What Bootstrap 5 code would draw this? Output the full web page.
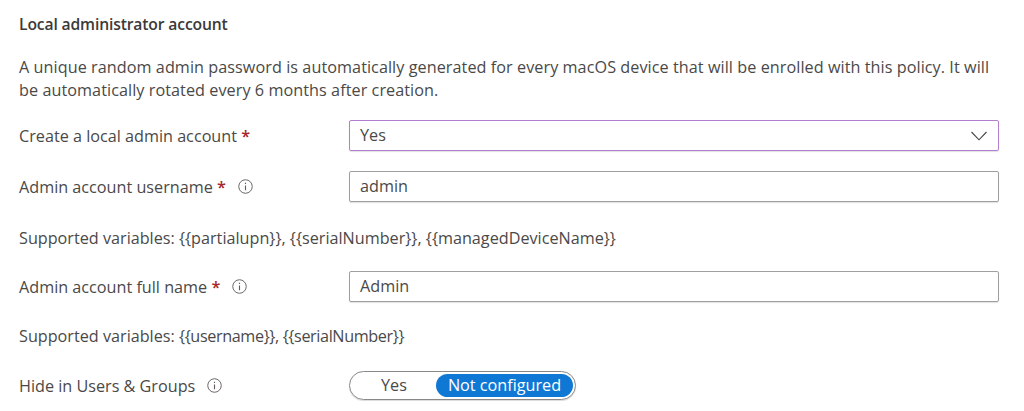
<!DOCTYPE html>
<html lang="en">
<head>
    <meta charset="UTF-8">
    <title>Local administrator account</title>
    <link rel="stylesheet" href="https://cdn.jsdelivr.net/npm/bootstrap@5.3.0/dist/css/bootstrap.min.css">
    <style>
        body {
            font-family: "Open Sans", "Noto Sans", sans-serif;
            font-size: 16.2px;
            color: #4a4948;
            background: #fff;
            overflow: hidden;
        }
        .page-wrap { padding: 13px 25px 0 19px; }
        .section-title { font-size: 15.7px; font-weight: 600; letter-spacing: -.15px; line-height: 22px; margin: 0 0 21px; color: #3b3a39; }
        .intro-text { line-height: 23px; margin: 0 0 18px; letter-spacing: .06px; }
        .form-line { height: 31px; }
        .line-label { width: 330px; flex: none; line-height: 22px; }
        .req-star { color: #a4262c; font-weight: 600; }
        .info-icon { width: 15px; height: 15px; margin-left: 12px; color: #605e5c; }
        .text-box {
            flex: 1;
            height: 31px;
            border: 1px solid #a19f9d;
            border-radius: 2px;
            padding: 0 10px;
            line-height: 29px;
            box-shadow: 0 1px 1px rgba(0,0,0,.12);
        }
        .text-box.is-open { border-color: #b27fd0; }
        .chevron-icon { width: 16px; height: 10px; color: #444; margin-right: 1px; }
        .hint-line { line-height: 22px; }
        .hint-tight { margin-top: 23px; }
        .var-list { letter-spacing: -.38px; }
        .gap-a { margin-top: 20px; }
        .gap-b { margin-top: 25px; }
        .gap-c { margin-top: 22px; }
        .gap-d { margin-top: 23px; }
        .pill-switch {
            width: 227px;
            height: 29px;
            border: 1px solid #8a8886;
            border-radius: 15px;
            padding: 2px;
            box-shadow: 0 1px 1px rgba(0,0,0,.15);
        }
        .pill-opt { flex: 1; text-align: center; line-height: 23px; border-radius: 12px; }
        .pill-on { flex: none; width: 137px; background: #0f78d4; color: #fff; }
    </style>
</head>
<body>
    <div class="page-wrap">
        <h2 class="section-title">Local administrator account</h2>
        <p class="intro-text">A unique random admin password is automatically generated for every macOS device that will be enrolled with this policy. It will be automatically rotated every 6 months after creation.</p>

        <div class="d-flex align-items-center form-line">
            <div class="line-label">Create a local admin account <span class="req-star">*</span></div>
            <div class="text-box is-open d-flex align-items-center justify-content-between">
                <span>Yes</span>
                <svg class="chevron-icon" viewBox="0 0 16 10" fill="none" stroke="currentColor" stroke-width="1.1"><path d="M.5 1 8 8.8 15.5 1"/></svg>
            </div>
        </div>

        <div class="d-flex align-items-center form-line gap-a">
            <div class="line-label d-flex align-items-center">
                <span>Admin account username <span class="req-star">*</span></span>
                <svg class="info-icon" viewBox="0 0 16 16" fill="none" stroke="currentColor"><circle cx="8" cy="8" r="7.2" stroke-width="1"/><path d="M8 7v5M8 4v1.3" stroke-width="1.2"/></svg>
            </div>
            <div class="text-box">admin</div>
        </div>
        <div class="hint-line gap-b">Supported variables: {{partialupn}}, {{serialNumber}}, {{managedDeviceName}}</div>

        <div class="d-flex align-items-center form-line gap-c">
            <div class="line-label d-flex align-items-center">
                <span>Admin account full name <span class="req-star">*</span></span>
                <svg class="info-icon" viewBox="0 0 16 16" fill="none" stroke="currentColor"><circle cx="8" cy="8" r="7.2" stroke-width="1"/><path d="M8 7v5M8 4v1.3" stroke-width="1.2"/></svg>
            </div>
            <div class="text-box">Admin</div>
        </div>
        <div class="hint-line hint-tight">Supported variables: <span class="var-list">{{username}}, {{serialNumber}}</span></div>

        <div class="d-flex align-items-center form-line gap-d">
            <div class="line-label d-flex align-items-center">
                <span>Hide in Users &amp; Groups</span>
                <svg class="info-icon" viewBox="0 0 16 16" fill="none" stroke="currentColor"><circle cx="8" cy="8" r="7.2" stroke-width="1"/><path d="M8 7v5M8 4v1.3" stroke-width="1.2"/></svg>
            </div>
            <div class="pill-switch d-flex">
                <div class="pill-opt">Yes</div>
                <div class="pill-opt pill-on">Not configured</div>
            </div>
        </div>
    </div>
    <script src="https://cdn.jsdelivr.net/npm/bootstrap@5.3.0/dist/js/bootstrap.bundle.min.js"></script>
</body>
</html>
